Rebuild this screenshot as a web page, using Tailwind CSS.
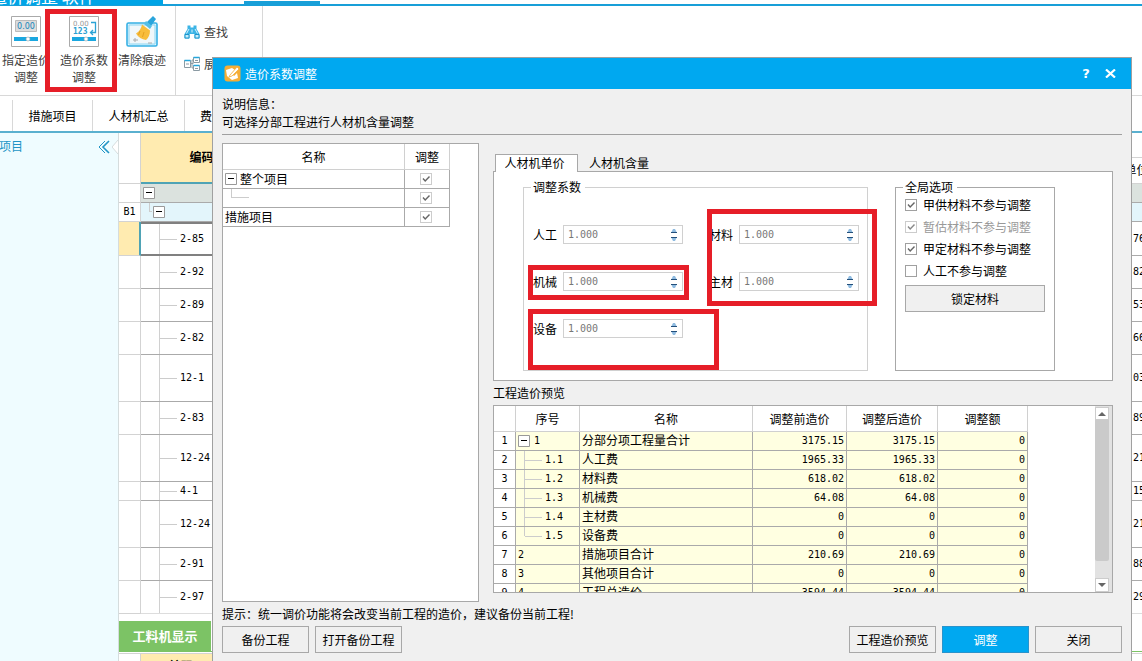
<!DOCTYPE html>
<html lang="zh-CN">
<head>
<meta charset="utf-8">
<title>造价系数调整</title>
<script src="https://cdn.jsdelivr.net/npm/@tailwindcss/browser@4"></script>
</head>
<body class="relative h-screen overflow-hidden bg-white text-xs text-black font-['Noto_Sans_CJK_SC',sans-serif]">

<!-- shared symbols -->
<svg class="hidden">
  <symbol id="minus" viewBox="0 0 12 12"><path d="M.5 .5h11v11h-11z" fill="#fff" stroke="#999"/><path d="M3 5.5h6" stroke="#000"/></symbol>
  <symbol id="spin" viewBox="0 0 8 12"><path d="M1 4h6L5 0H3z" fill="#8fbbe0"/><path d="M1 3h6v1h-6z" fill="#23507c"/><path d="M1 8h6L5 12H3z" fill="#8fbbe0"/><path d="M1 8h6v1h-6z" fill="#23507c"/></symbol>
</svg>

<div class="flex h-screen flex-col">
  <!-- window title and menu strip -->
  <header class="flex h-[6px] shrink-0 items-start border-b-2 border-[#189fd8]">
    <div class="flex h-[5px] w-[163px] shrink-0 items-end overflow-hidden bg-[#00a4e6] text-[17px] leading-[18px] text-white"><span class="-ml-[10px] whitespace-nowrap">造价调整 软件</span></div>
    <div class="ml-[81px] mt-px h-[5px] w-[76px] bg-[#189fd8]"></div>
  </header>

  <!-- ribbon -->
  <div class="flex h-[90px] shrink-0 border-b border-[#d8d8d8] text-[#404040]">
    <button class="flex w-[52px] flex-col items-center gap-1 pt-[10px] leading-[17px] whitespace-nowrap">
      <svg class="h-[31px] w-[30px] shrink-0" viewBox="0 0 30 31"><path d="M.5 .5h29v30h-29z" fill="#fff" stroke="#aaa"/><path d="M4.500 4.500h21v11h-21z" fill="#ddd" stroke="#bbb"/><text x="15" y="13" text-anchor="middle" font-family="DejaVu Sans" font-size="8" fill="#1583ba">0.00</text><path d="M3 21h24v4H3z" fill="#1aa7e0"/><circle cx="17" cy="23" r="2" fill="#fff" stroke="#aaa" stroke-width=".6"/></svg>
      <span>指定造价<br>调整</span>
    </button>
    <button class="relative flex w-[64px] flex-col items-center gap-1 pt-[10px] leading-[17px] whitespace-nowrap">
      <svg class="h-[31px] w-[30px] shrink-0" viewBox="0 0 30 31"><path d="M.5 .5h29v30h-29z" fill="#fff" stroke="#aaa"/><text x="4" y="10" font-family="DejaVu Sans" font-size="7" fill="#999">0.00</text><text x="4" y="18" font-family="DejaVu Sans Mono" font-size="8" font-weight="bold" fill="#2a9fd2">123</text><path d="M22 6.500h4.500v10H22m2-2.500-2.500 2.500 2.500 2.500" fill="none" stroke="#2ba3d6" stroke-width="1.300"/><path d="M3 21h24v4H3z" fill="#1aa7e0"/><circle cx="17" cy="23" r="2" fill="#fff" stroke="#aaa" stroke-width=".6"/></svg>
      <span>造价系数<br>调整</span>
      <span class="absolute top-[3px] -left-[7px] h-[83px] w-[72px] border-5 border-[#e61e28]"></span>
    </button>
    <button class="flex w-[52px] flex-col items-center gap-1 pt-[10px] leading-[17px] whitespace-nowrap">
      <svg class="h-[31px] w-[32px] shrink-0" viewBox="0 0 32 31"><rect x="1" y="7" width="30" height="23" rx="1.500" fill="#dff4fd" stroke="#36b0e4" stroke-width="1.600"/><path d="M3 9h26v19H3z" fill="#f0f7fa" stroke="#8ed6f2"/><path d="M27 0l3 3-5 7-4-4z" fill="#2aa5dc"/><path d="M20 5l6 5-2 3-6-5z" fill="#55bfe8"/><path d="M16 8.500l8 6c0 4-1.500 7.500-4 9.500-4-.5-8-3-10-6.500 3.500-2 5.500-5.500 6-9z" fill="#f8bd3c"/><path d="M14 15l-1.500 4M18 16l-1.500 5" stroke="#e09b1c" stroke-width=".8"/><path d="M7 24h5M9 22v4M22 27h4" stroke="#aaa"/></svg>
      <span>清除痕迹</span>
    </button>
    <div class="ml-[7px] flex w-[88px] flex-col gap-[14px] border-x border-[#d8d8d8] pt-[17px] pl-2">
      <button class="flex h-[18px] items-center gap-1">
        <svg class="size-4" viewBox="0 0 16 16"><path d="M3.500 1.500h3v2h3v-2h3v3.500l3 5V14.500h-5V10h-5v4.500H.5V10l3-5z" fill="#3bb4e6"/><path d="M5 5L2.500 9.500M11 5l2.500 4.500M8 5.500v3" stroke="#d6f1fc" stroke-width="1"/><path d="M1 10.500h4v3.500H1zM11 10.500h4v3.500h-4z" fill="#c5edfb" stroke="#1b95cc"/></svg>查找</button>
      <button class="flex h-[18px] items-center gap-1">
        <svg class="size-4" viewBox="0 0 16 16" fill="#fff" stroke="#8b9aa3"><path d="M7 7.500h2.500M8 4v8h2M8 4h2" fill="none"/><path d="M.5 4.500h6v7h-6zM9.500 1.500h6v5h-6zM9.500 9.500h6v5h-6z"/><path d="M.5 4.500h6M9.500 1.500h6M9.500 9.500h6" stroke="#25a7dd" stroke-width="1.500"/><path d="M2 8h3M11 4.500h3M11 12.500h3"/></svg>展开</button>
    </div>
  </div>

  <!-- page tabs -->
  <nav class="flex h-[37px] shrink-0 border-b-2 border-[#5ab0cf] pt-1 pl-3">
    <a href="#" class="flex w-[80px] items-center justify-center border-l border-[#d8d8d8]">措施项目</a>
    <a href="#" class="flex w-[92px] items-center justify-center border-l border-[#d8d8d8]">人材机汇总</a>
    <a href="#" class="flex items-center border-l border-[#d8d8d8] pl-[15px]">费用汇总</a>
  </nav>

  <div class="flex min-h-0 flex-1">
    <aside class="flex w-[119px] shrink-0 items-start justify-between border-r border-[#d5dcdd] bg-[#effcff] pt-1 text-[#2295c6]">
      <span class="-ml-px leading-[18px]">项目</span>
      <button class="flex h-[20px] items-center gap-[2px]" aria-label="收起">
        <svg class="h-[14px] w-[12px]" viewBox="0 0 12 14" fill="none" stroke="#2295c6"><path d="M7 1L1 7l6 6" stroke-width="1"/><path d="M11 1L5 7l6 6" stroke-width="1.600"/></svg>
        <svg class="h-[14px] w-[6px]" viewBox="0 0 6 14"><path d="M6 0v14L0 7z" fill="#fff"/><path d="M6 0L0 7l6 7" fill="none" stroke="#d5dcdd"/></svg>
      </button>
    </aside>

    <main class="min-w-0 flex-1">
      <table class="w-full table-fixed border-separate border-spacing-0 font-['DejaVu_Sans_Mono','Noto_Sans_CJK_SC',monospace] text-[10px] [&_td]:overflow-hidden [&_td]:border-b [&_td]:border-[#aaa] [&_td]:p-0 [&_td]:whitespace-nowrap [&_td:first-child]:border-r [&_td:first-child]:border-[#d3d3d3] [&_td:last-child]:pl-[2px]">
        <colgroup><col class="w-[22px]"><col class="w-[121px]"><col><col class="w-[11px]"></colgroup>
        <thead class="text-xs">
          <tr class="h-[51px]">
            <th class="border-r border-b border-[#d3d3d3] p-0"></th>
            <th class="border-b-2 border-[#4fa3b5] bg-[#ffebb0] p-0 font-bold">编码</th>
            <th class="border-b-2 border-[#4fa3b5] bg-[#ffebb0] p-0"></th>
            <th class="overflow-hidden border-b border-[#d3d3d3] p-0 pt-[24px] font-normal"><div class="flex h-[26px] items-center justify-center border-t border-[#d3d3d3] whitespace-nowrap">单位</div></th>
          </tr>
        </thead>
        <tbody>
          <tr class="bg-[#dbe2de]"><td class="bg-white"></td><td><div class="flex h-[18px] items-center pl-[2px]"><svg class="size-3"><use href="#minus"/></svg></div></td><td></td><td></td></tr>
          <tr class="bg-[#e3f5fb]"><td class="bg-white text-center">B1</td><td><div class="flex h-[18px] items-center pl-2"><span class="-mt-[10px] mr-px h-[9px] w-[3px] border-b border-l border-[#ccc]"></span><svg class="size-3"><use href="#minus"/></svg></div></td><td></td><td></td></tr>
          <tr><td class="border-r-2! border-r-[#4fa3b5]! bg-[#ffebb0]"></td><td class="border-y-2! border-[#808080]!"><div class="flex h-[30px] items-center"><span class="h-full w-[19px] border-r border-[#d0d0d0]"></span><span class="mr-[3px] w-[17px] border-t border-[#ccc]"></span>2-85</div></td><td></td><td>76</td></tr>
          <tr><td></td><td><div class="flex h-8 items-center"><span class="h-full w-[19px] border-r border-[#d0d0d0]"></span><span class="mr-[3px] w-[17px] border-t border-[#ccc]"></span>2-92</div></td><td></td><td>82</td></tr>
          <tr><td></td><td><div class="flex h-8 items-center"><span class="h-full w-[19px] border-r border-[#d0d0d0]"></span><span class="mr-[3px] w-[17px] border-t border-[#ccc]"></span>2-89</div></td><td></td><td>53</td></tr>
          <tr><td></td><td><div class="flex h-8 items-center"><span class="h-full w-[19px] border-r border-[#d0d0d0]"></span><span class="mr-[3px] w-[17px] border-t border-[#ccc]"></span>2-82</div></td><td></td><td>66</td></tr>
          <tr><td></td><td><div class="flex h-[46px] items-center"><span class="h-full w-[19px] border-r border-[#d0d0d0]"></span><span class="mr-[3px] w-[17px] border-t border-[#ccc]"></span>12-1</div></td><td></td><td>03</td></tr>
          <tr><td></td><td><div class="flex h-8 items-center"><span class="h-full w-[19px] border-r border-[#d0d0d0]"></span><span class="mr-[3px] w-[17px] border-t border-[#ccc]"></span>2-83</div></td><td></td><td>89</td></tr>
          <tr><td></td><td><div class="flex h-[46px] items-center"><span class="h-full w-[19px] border-r border-[#d0d0d0]"></span><span class="mr-[3px] w-[17px] border-t border-[#ccc]"></span>12-24</div></td><td></td><td>21</td></tr>
          <tr><td></td><td><div class="flex h-[18px] items-center"><span class="h-full w-[19px] border-r border-[#d0d0d0]"></span><span class="mr-[3px] w-[17px] border-t border-[#ccc]"></span>4-1</div></td><td></td><td>15</td></tr>
          <tr><td></td><td><div class="flex h-[46px] items-center"><span class="h-full w-[19px] border-r border-[#d0d0d0]"></span><span class="mr-[3px] w-[17px] border-t border-[#ccc]"></span>12-24</div></td><td></td><td>21</td></tr>
          <tr><td></td><td><div class="flex h-8 items-center"><span class="h-full w-[19px] border-r border-[#d0d0d0]"></span><span class="mr-[3px] w-[17px] border-t border-[#ccc]"></span>2-91</div></td><td></td><td>88</td></tr>
          <tr><td></td><td class="border-[#ddd]!"><div class="flex h-8 items-center"><span class="h-full w-[19px] border-r border-[#d0d0d0]"></span><span class="mr-[3px] w-[17px] border-t border-[#ccc]"></span>2-97</div></td><td></td><td class="border-[#ddd]!">29</td></tr>
        </tbody>
      </table>
      <div class="mt-[7px] border-b border-[#7cc365]">
        <button class="flex h-[30px] w-[92px] items-center justify-center bg-[#7cc365] text-[13px] font-bold text-white">工料机显示</button>
      </div>
      <div class="mt-px flex border-t border-[#d3d3d3]">
        <span class="w-[22px] border-r border-[#d3d3d3]"></span>
        <span class="h-6 w-[80px] bg-[#ffebb0] text-center font-bold leading-6">编码</span>
      </div>
    </main>
  </div>
</div>

<!-- dialog window -->
<section role="dialog" aria-label="造价系数调整" class="absolute top-[57px] right-[10px] bottom-0 left-[212px] border border-b-0 border-[#a0a0a0] bg-[#f0f0f0]">
  <header class="flex h-[31px] items-center bg-[#00a8f0] pr-[13px] pl-[11px] text-white">
    <svg class="mr-1 size-[17px]" viewBox="0 0 17 17"><rect x=".5" y=".5" width="16" height="16" rx="3" fill="#f5ad36"/><path d="M2 5l6-2 3 2-3 4 2 2 3-3 1 5-6 2-5-4z" fill="#fff"/><path d="M6 10l7-8 2 2-7 7-3 1z" fill="#fff" stroke="#f5ad36" stroke-width=".8"/></svg>
    <h1>造价系数调整</h1>
    <button class="ml-auto w-4 text-center font-['DejaVu_Sans',sans-serif] text-[13px] font-bold">?</button>
    <button class="ml-2 flex w-4 justify-center" aria-label="关闭窗口"><svg class="h-[9px] w-[11px]" viewBox="0 0 11 9"><path d="M1 .5l9 8M10 .5l-9 8" stroke="#fff" stroke-width="2.200"/></svg></button>
  </header>

  <div class="px-[9px] pt-[6px]">
    <div class="leading-[18px]"><p>说明信息：</p><p>可选择分部工程进行人材机含量调整</p></div>
    <hr class="mt-[3px] border-[#a0a0a0]">

    <div class="mt-2 flex gap-[14px]">
      <!-- scope tree -->
      <div class="w-[257px] shrink-0 border border-[#a8a8a8] bg-white">
        <table class="w-[227px] table-fixed border-separate border-spacing-0 [&_td]:border-r [&_td]:border-b [&_td]:border-[#aaa] [&_td]:p-0 [&_th]:border-r [&_th]:border-b [&_th]:border-[#d0d0d0] [&_th]:p-0 [&_th]:font-normal">
          <colgroup><col class="w-[182px]"><col class="w-[45px]"></colgroup>
          <thead><tr class="h-[26px]"><th>名称</th><th>调整</th></tr></thead>
          <tbody>
            <tr><td><label for="s1" class="flex h-[18px] items-center gap-[3px] pl-[2px]"><svg class="size-3"><use href="#minus"/></svg>整个项目</label></td>
              <td><div class="flex justify-center pr-[3px]"><input id="s1" type="checkbox" checked class="size-3 appearance-none border border-[#ccc] bg-white"><svg class="pointer-events-none -ml-3 size-3" viewBox="0 0 12 12"><path d="M3 5.500L5.200 8 9.500 3.500" fill="none" stroke="#666" stroke-width="1.400"/></svg></div></td></tr>
            <tr><td><div class="h-[18px] pl-2"><span class="block h-[9px] w-[18px] border-b border-l border-[#ccc]"></span></div></td>
              <td><div class="flex justify-center pr-[3px]"><input aria-label="单项工程" type="checkbox" checked class="size-3 appearance-none border border-[#ccc] bg-white"><svg class="pointer-events-none -ml-3 size-3" viewBox="0 0 12 12"><path d="M3 5.500L5.200 8 9.500 3.500" fill="none" stroke="#666" stroke-width="1.400"/></svg></div></td></tr>
            <tr><td><label for="s3" class="flex h-[18px] items-center pl-[2px]">措施项目</label></td>
              <td><div class="flex justify-center pr-[3px]"><input id="s3" type="checkbox" checked class="size-3 appearance-none border border-[#ccc] bg-white"><svg class="pointer-events-none -ml-3 size-3" viewBox="0 0 12 12"><path d="M3 5.500L5.200 8 9.500 3.500" fill="none" stroke="#666" stroke-width="1.400"/></svg></div></td></tr>
          </tbody>
        </table>
      </div>

      <div class="mr-[9px] min-w-0 flex-1 pt-[11px] pb-[9px]">
        <div class="flex items-end pl-[2px]" role="tablist">
          <button role="tab" class="relative z-10 -mb-px flex h-[18px] w-[83px] justify-center border border-b-0 border-[#a8a8a8] bg-white pr-1 leading-[15px]">人材机单价</button>
          <button role="tab" class="h-[17px] px-[11px] leading-[17px]">人材机含量</button>
        </div>

        <div class="relative flex h-[210px] items-start gap-[27px] border border-[#a8a8a8] bg-white pt-[7px] pl-[29px]">
          <fieldset class="h-[192px] w-[345px] border border-[#d0d0d0] px-[7px]">
            <legend class="pr-1 pl-[2px] leading-4">调整系数</legend>
            <div class="mt-[30px] grid grid-cols-[150px_150px] gap-x-[26px] gap-y-[28px] pl-[2px]">
              <label class="flex h-[19px] items-center gap-[6px] whitespace-nowrap">人工<span class="flex h-[19px] w-[120px] items-center border border-[#d0d0d0] bg-white pr-1 pl-1"><input value="1.000" class="min-w-0 flex-1 font-['DejaVu_Sans_Mono',monospace] text-[10px] text-[#777]"><svg class="h-3 w-2"><use href="#spin"/></svg></span></label>
              <label class="flex h-[19px] items-center gap-[6px] whitespace-nowrap">材料<span class="flex h-[19px] w-[120px] items-center border border-[#d0d0d0] bg-white pr-1 pl-1"><input value="1.000" class="min-w-0 flex-1 font-['DejaVu_Sans_Mono',monospace] text-[10px] text-[#777]"><svg class="h-3 w-2"><use href="#spin"/></svg></span></label>
              <label class="flex h-[19px] items-center gap-[6px] whitespace-nowrap">机械<span class="flex h-[19px] w-[120px] items-center border border-[#d0d0d0] bg-white pr-1 pl-1"><input value="1.000" class="min-w-0 flex-1 font-['DejaVu_Sans_Mono',monospace] text-[10px] text-[#777]"><svg class="h-3 w-2"><use href="#spin"/></svg></span></label>
              <label class="flex h-[19px] items-center gap-[6px] whitespace-nowrap">主材<span class="flex h-[19px] w-[120px] items-center border border-[#d0d0d0] bg-white pr-1 pl-1"><input value="1.000" class="min-w-0 flex-1 font-['DejaVu_Sans_Mono',monospace] text-[10px] text-[#777]"><svg class="h-3 w-2"><use href="#spin"/></svg></span></label>
              <label class="flex h-[19px] items-center gap-[6px] whitespace-nowrap">设备<span class="flex h-[19px] w-[120px] items-center border border-[#d0d0d0] bg-white pr-1 pl-1"><input value="1.000" class="min-w-0 flex-1 font-['DejaVu_Sans_Mono',monospace] text-[10px] text-[#777]"><svg class="h-3 w-2"><use href="#spin"/></svg></span></label>
            </div>
          </fieldset>

          <fieldset class="h-[192px] w-[160px] border border-[#a8a8a8] px-[7px]">
            <legend class="pr-1 pl-[2px] leading-4">全局选项</legend>
            <div class="-mt-px flex flex-col px-[2px] leading-[22px]">
              <label class="flex h-[22px] items-center"><input type="checkbox" checked class="size-3 appearance-none border border-[#a0a0a0]"><svg class="pointer-events-none mr-[6px] -ml-3 size-3" viewBox="0 0 12 12"><path d="M3 5.500L5.200 8 9.500 3.500" fill="none" stroke="#666" stroke-width="1.400"/></svg>甲供材料不参与调整</label>
              <label class="flex h-[22px] items-center text-[#999]"><input type="checkbox" checked disabled class="size-3 appearance-none border border-[#ccc]"><svg class="pointer-events-none mr-[6px] -ml-3 size-3" viewBox="0 0 12 12"><path d="M3 5.500L5.200 8 9.500 3.500" fill="none" stroke="#888" stroke-width="1.400"/></svg>暂估材料不参与调整</label>
              <label class="flex h-[22px] items-center"><input type="checkbox" checked class="size-3 appearance-none border border-[#a0a0a0]"><svg class="pointer-events-none mr-[6px] -ml-3 size-3" viewBox="0 0 12 12"><path d="M3 5.500L5.200 8 9.500 3.500" fill="none" stroke="#666" stroke-width="1.400"/></svg>甲定材料不参与调整</label>
              <label class="flex h-[22px] items-center gap-[6px]"><input type="checkbox" class="size-3 appearance-none border border-[#a0a0a0]">人工不参与调整</label>
              <button class="mt-[3px] h-[27px] border border-[#a8a8a8] bg-[#f0f0f0]">锁定材料</button>
            </div>
          </fieldset>

          <!-- highlight frames -->
          <span class="pointer-events-none absolute top-[93px] left-[34px] h-[35px] w-[161px] border-5 border-[#e61e28]"></span>
          <span class="pointer-events-none absolute top-[37px] left-[213px] h-[97px] w-[170px] border-5 border-[#e61e28]"></span>
          <span class="pointer-events-none absolute top-[137px] left-[34px] h-[61px] w-[191px] border-5 border-[#e61e28]"></span>
        </div>

        <h2 class="leading-6">工程造价预览</h2>
        <div class="flex h-[188px] justify-between overflow-hidden border border-[#a8a8a8] bg-white">
          <table class="w-[534px] table-fixed border-separate border-spacing-0 self-start text-right [&_td]:h-[19px] [&_td]:border-r [&_td]:border-b [&_td]:border-[#aaa] [&_td]:px-[2px] [&_td]:py-0 [&_td]:leading-[18px] [&_td]:font-['DejaVu_Sans_Mono','Noto_Sans_CJK_SC',monospace] [&_td]:text-[10px] [&_td:first-child]:bg-white [&_td:first-child]:text-center [&_td:nth-child(2)]:text-left [&_td:nth-child(3)]:text-left [&_td:nth-child(3)]:text-xs [&_td:nth-child(3)]:leading-[18px] [&_th]:border-r [&_th]:border-b [&_th]:border-[#d0d0d0] [&_th]:p-0 [&_th]:text-center [&_th]:font-normal">
            <colgroup><col class="w-[22px]"><col class="w-[64px]"><col class="w-[173px]"><col class="w-[94px]"><col class="w-[91px]"><col class="w-[90px]"></colgroup>
            <thead><tr class="h-[26px]"><th></th><th>序号</th><th>名称</th><th>调整前造价</th><th>调整后造价</th><th>调整额</th></tr></thead>
            <tbody class="bg-[#ffffe1]">
              <tr><td>1</td><td><div class="flex items-center gap-1"><svg class="size-3"><use href="#minus"/></svg>1</div></td><td>分部分项工程量合计</td><td>3175.15</td><td>3175.15</td><td>0</td></tr>
              <tr><td>2</td><td><div class="flex h-[18px] items-center pl-[6px]"><span class="h-full border-l border-[#ccc]"></span><span class="mr-[3px] w-[17px] border-t border-[#ccc]"></span>1.1</div></td><td>人工费</td><td>1965.33</td><td>1965.33</td><td>0</td></tr>
              <tr><td>3</td><td><div class="flex h-[18px] items-center pl-[6px]"><span class="h-full border-l border-[#ccc]"></span><span class="mr-[3px] w-[17px] border-t border-[#ccc]"></span>1.2</div></td><td>材料费</td><td>618.02</td><td>618.02</td><td>0</td></tr>
              <tr><td>4</td><td><div class="flex h-[18px] items-center pl-[6px]"><span class="h-full border-l border-[#ccc]"></span><span class="mr-[3px] w-[17px] border-t border-[#ccc]"></span>1.3</div></td><td>机械费</td><td>64.08</td><td>64.08</td><td>0</td></tr>
              <tr><td>5</td><td><div class="flex h-[18px] items-center pl-[6px]"><span class="h-full border-l border-[#ccc]"></span><span class="mr-[3px] w-[17px] border-t border-[#ccc]"></span>1.4</div></td><td>主材费</td><td>0</td><td>0</td><td>0</td></tr>
              <tr><td>6</td><td><div class="flex h-[18px] items-center pl-[6px]"><span class="h-[9px] self-start border-l border-[#ccc]"></span><span class="mr-[3px] w-[17px] border-t border-[#ccc]"></span>1.5</div></td><td>设备费</td><td>0</td><td>0</td><td>0</td></tr>
              <tr><td>7</td><td>2</td><td>措施项目合计</td><td>210.69</td><td>210.69</td><td>0</td></tr>
              <tr><td>8</td><td>3</td><td>其他项目合计</td><td>0</td><td>0</td><td>0</td></tr>
              <tr><td>9</td><td>4</td><td>工程总造价</td><td>3594.44</td><td>3594.44</td><td>0</td></tr>
            </tbody>
          </table>
          <div class="flex w-[17px] flex-col items-start bg-[#e2e2e2] pt-px">
            <span class="flex h-[13px] w-[14px] items-center justify-center border border-[#ccc] bg-white"><svg class="h-1 w-2" viewBox="0 0 8 4"><path d="M0 4h8L4 0z" fill="#666"/></svg></span>
            <span class="h-[141px] w-[14px] rounded-b-xs bg-[#cacaca]"></span>
            <span class="mt-auto flex h-[14px] w-[14px] items-center justify-center border border-[#ccc] bg-white"><svg class="h-1 w-2" viewBox="0 0 8 4"><path d="M0 0h8L4 4z" fill="#666"/></svg></span>
          </div>
        </div>
      </div>
    </div>

    <p class="mt-[3px] leading-[18px]">提示：统一调价功能将会改变当前工程的造价，建议备份当前工程!</p>
    <div class="mt-[3px] flex gap-[6px]">
      <button class="h-[27px] w-[87px] border border-[#a8a8a8]">备份工程</button>
      <button class="h-[27px] w-[87px] border border-[#a8a8a8]">打开备份工程</button>
      <button class="ml-auto h-[27px] w-[87px] border border-[#a8a8a8]">工程造价预览</button>
      <button class="h-[27px] w-[87px] border border-[#2a93cb] bg-[#00a8f0] text-white">调整</button>
      <button class="h-[27px] w-[87px] border border-[#a8a8a8]">关闭</button>
    </div>
  </div>
</section>
</body>
</html>
